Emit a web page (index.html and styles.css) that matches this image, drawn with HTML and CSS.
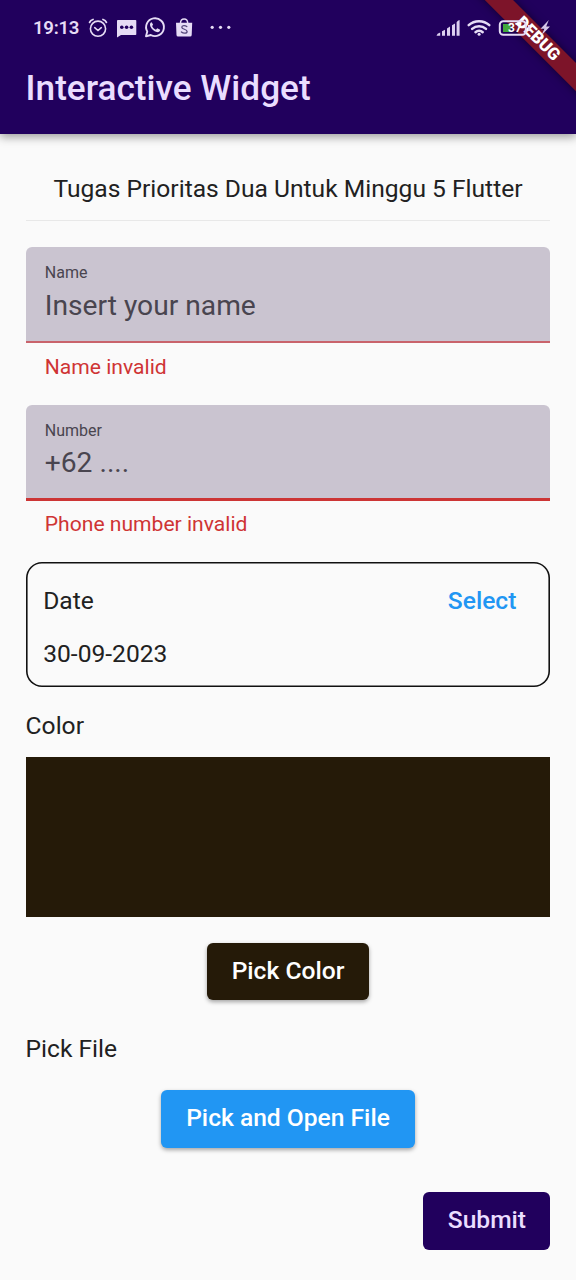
FILE: index.html
```html
<!DOCTYPE html>
<html lang="id">
<head>
<meta charset="utf-8">
<title>Interactive Widget</title>
<link rel="stylesheet" href="styles.css">
</head>
<body>
<div class="screen">
  <header class="app-bar">
    <div class="status-bar">
      <span class="clock">19:13</span>
      <svg class="status-icons" width="160" height="28" viewBox="84 14 160 28" fill="none" stroke="#e6dcf5" stroke-linecap="round">
        <circle cx="98" cy="28.7" r="7.6" stroke-width="1.6"/>
        <path d="M94.7 27.7l3.3 2.8 3.3-2.8" stroke-width="1.6"/>
        <path d="M89.6 22.3q.8-2 3.4-2.8M106.4 22.3q-.8-2-3.4-2.8" stroke-width="1.8"/>
        <path d="M117.500 20h18a.8.8 0 0 1 .8.8v13.400a.8.8 0 0 1-.8.8h-14.500l-4 2.600v-16.800z" fill="#e6dcf5" stroke="none"/>
        <g fill="#21005d" stroke="none"><circle cx="121.800" cy="27.300" r="1.800"/><circle cx="126.600" cy="27.300" r="1.800"/><circle cx="131.400" cy="27.300" r="1.800"/></g>
        <path d="M146 36.300l1.300-4.700a8.900 8.900 0 1 1 3.500 3.400z" stroke-width="1.900" stroke-linejoin="round"/>
        <path d="M151.700 22.300c-1.800.5-2.100 2.400-1.300 4.200 1.400 2.900 3.500 4.700 6.300 5.500 1.800.5 3.400-.5 3.500-2.300l-2.900-1.500-1.400 1.500c-1.900-.8-3-1.900-3.800-3.600l1-1.300z" fill="#e6dcf5" stroke="none"/>
        <path d="M176 22.700h16.200l-.5 12.400a1.600 1.600 0 0 1-1.600 1.500h-12a1.600 1.600 0 0 1-1.600-1.500z" fill="#e6dcf5" stroke="none"/>
        <path d="M180.500 23c.2-5.300 7-5.300 7.200 0" stroke-width="1.500"/>
        <path d="M186.800 26.600c-1.600-1.400-5-1.400-5 .7 0 2.300 5.300 1.600 5.300 4.100 0 2.300-3.800 2.200-5.700.6" stroke="#54477a" stroke-width="1.300"/>
        <g fill="#e6dcf5" stroke="none"><circle cx="212.200" cy="27.300" r="1.600"/><circle cx="220.500" cy="27.300" r="1.600"/><circle cx="228.800" cy="27.300" r="1.600"/></g>
      </svg>
      <svg class="signal-icons" width="120" height="28" viewBox="434 14 120 28" fill="none" stroke="#e6dcf5">
        <path d="M436.500 35.800q.4-2.400 3.700-3.400v3.400zM442 35.800v-4.500l3-1.500v6zM447 35.800v-7.400l3-1.800v9.200zM452 35.800v-10.500l3-1.900v12.400zM456.600 35.800v-13.500q1-1.800 3-2.300v15.800z" fill="#dccff0" stroke="none"/>
        <path d="M468.700 25.200c5.800-5.400 14.800-5.400 20.600 0M472.100 28.900c4-3.700 9.900-3.700 13.900 0M475.500 32.200c2-1.800 5.200-1.800 7.200 0" stroke-width="2.500" stroke-linecap="round"/>
        <circle cx="479.100" cy="34.300" r="1.500" fill="#e6dcf5" stroke="none"/>
        <rect x="499.800" y="21.300" width="26" height="13.500" rx="3.500" stroke-width="2"/>
        <rect x="503" y="24" width="7.500" height="8" fill="#42a83b" stroke="none"/>
        <path d="M529 25v6" stroke-width="2"/>
        <text class="battery-level" x="508" y="32.200">37</text>
        <path d="M548.800 20l-8.300 8.800h3.900l-2.900 6.500 8.500-8.800h-3.800z" fill="#d5c8e8" stroke="none"/>
      </svg>
    </div>
    <h1 class="app-title">Interactive Widget</h1>
  </header>
  <div class="debug-corner"><div class="debug-banner"><span>DEBUG</span></div></div>

  <main class="content">
    <p class="heading">Tugas Prioritas Dua Untuk Minggu 5 Flutter</p>
    <div class="field">
      <div class="field-box">
        <span class="field-label">Name</span>
        <span class="field-hint">Insert your name</span>
      </div>
      <span class="field-error">Name invalid</span>
    </div>
    <div class="field">
      <div class="field-box focused">
        <span class="field-label">Number</span>
        <span class="field-hint">+62 ....</span>
      </div>
      <span class="field-error">Phone number invalid</span>
    </div>
    <section class="date-card">
      <div class="date-row"><span>Date</span><span class="select">Select</span></div>
      <div class="date-value">30-09-2023</div>
    </section>
    <div class="section-label">Color</div>
    <div class="swatch"></div>
    <div class="button pick-color">Pick Color</div>
    <div class="section-label file-label">Pick File</div>
    <div class="button pick-file">Pick and Open File</div>
    <div class="button submit">Submit</div>
  </main>
</div>
</body>
</html>
```

FILE: styles.css
```css
* { box-sizing: border-box; }
body {
  margin: 0;
  background: #fafafa;
  color: #212121;
  font-family: Roboto, "Liberation Sans", sans-serif;
  font-size: 24.6px;
}
.screen {
  position: relative;
  width: 576px;
  height: 1280px;
  overflow: hidden;
  display: flex;
  flex-direction: column;
}
.app-bar {
  height: 133.5px;
  flex: none;
  background: #21005d;
  box-shadow: 0 3px 9px rgba(0, 0, 0, .38);
}
.status-bar {
  height: 56px;
  padding: 0 22px 0 33px;
  display: flex;
  align-items: center;
}
.clock {
  width: 51px;
  color: #e6dcf5;
  font-size: 18.6px;
  font-weight: 600;
  line-height: 22px;
  letter-spacing: -.3px;
  white-space: nowrap;
}
.signal-icons {
  position: relative;
  z-index: 2;
  margin-left: auto;
}
.battery-level {
  fill: #fff;
  stroke: none;
  font-size: 12px;
  font-weight: 700;
}
.app-title {
  margin: 0;
  padding-left: 25.6px;
  color: #eaddff;
  font-size: 35.2px;
  font-weight: 500;
  line-height: 64px;
}
.debug-corner {
  position: absolute;
  z-index: 1;
  top: 0;
  right: 0;
  width: 120px;
  height: 120px;
  overflow: hidden;
}
.debug-banner {
  position: absolute;
  top: 28.5px;
  left: -8.5px;
  width: 180px;
  height: 19.5px;
  transform: rotate(45deg);
  background: #7d1429;
  box-shadow: 0 0 9px rgba(0, 0, 0, .5);
  color: #fff;
  font-size: 17px;
  font-weight: 900;
  line-height: 19.5px;
  text-align: center;
}
.content {
  padding: 26.5px 25.6px 0;
  display: flex;
  flex-direction: column;
}
.heading {
  margin: 0 0 26px;
  height: 61px;
  padding-top: 13.5px;
  border-bottom: 1.5px solid #e8e8e8;
  line-height: 30px;
  text-align: center;
  white-space: nowrap;
}
.field {
  height: 157.5px;
  display: flex;
  flex-direction: column;
}
.field-box {
  height: 96px;
  padding: 16px 19.2px 0;
  border-radius: 6px 6px 0 0;
  border-bottom: 2px solid #c9636b;
  background: #cac4d0;
  color: #49454f;
  display: flex;
  flex-direction: column;
}
.field-box.focused { border-bottom: 3px solid #cc3535; }
.field-label { font-size: 16px; line-height: 20px; }
.field-hint { font-size: 28.2px; line-height: 36px; padding-top: 4.5px; }
.field-error {
  padding: 10.5px 19.2px 0;
  color: #cf3434;
  font-size: 21.1px;
  line-height: 25px;
}
/* The outline is 1.6px wide, so it is drawn as an inset shadow rather than a border. */
.date-card {
  height: 124.5px;
  padding: 24px 34px 0 17.6px;
  box-shadow: inset 0 0 0 1.6px #111;
  border-radius: 16px;
}
.date-row {
  display: flex;
  justify-content: space-between;
  line-height: 30px;
}
.select { color: #2196f3; font-weight: 500; }
.date-value { padding-top: 23px; line-height: 30px; }
.section-label { padding-top: 24px; line-height: 30px; }
.swatch { height: 160px; margin-top: 16.5px; background: #251a08; }
.button {
  height: 57.6px;
  border-radius: 6px;
  font-weight: 500;
  line-height: 56px;
  text-align: center;
  color: #fff;
  box-shadow: 0 2px 4px rgba(0, 0, 0, .35);
}
.pick-color { width: 162px; margin-top: 25.6px; align-self: center; background: #251a08; }
.file-label { padding-top: 34px; }
.pick-file { width: 253.5px; margin-top: 26px; align-self: center; background: #2196f3; }
.submit { width: 127px; margin-top: 44.7px; align-self: flex-end; background: #21005d; color: #eaddff; box-shadow: none; }
```
